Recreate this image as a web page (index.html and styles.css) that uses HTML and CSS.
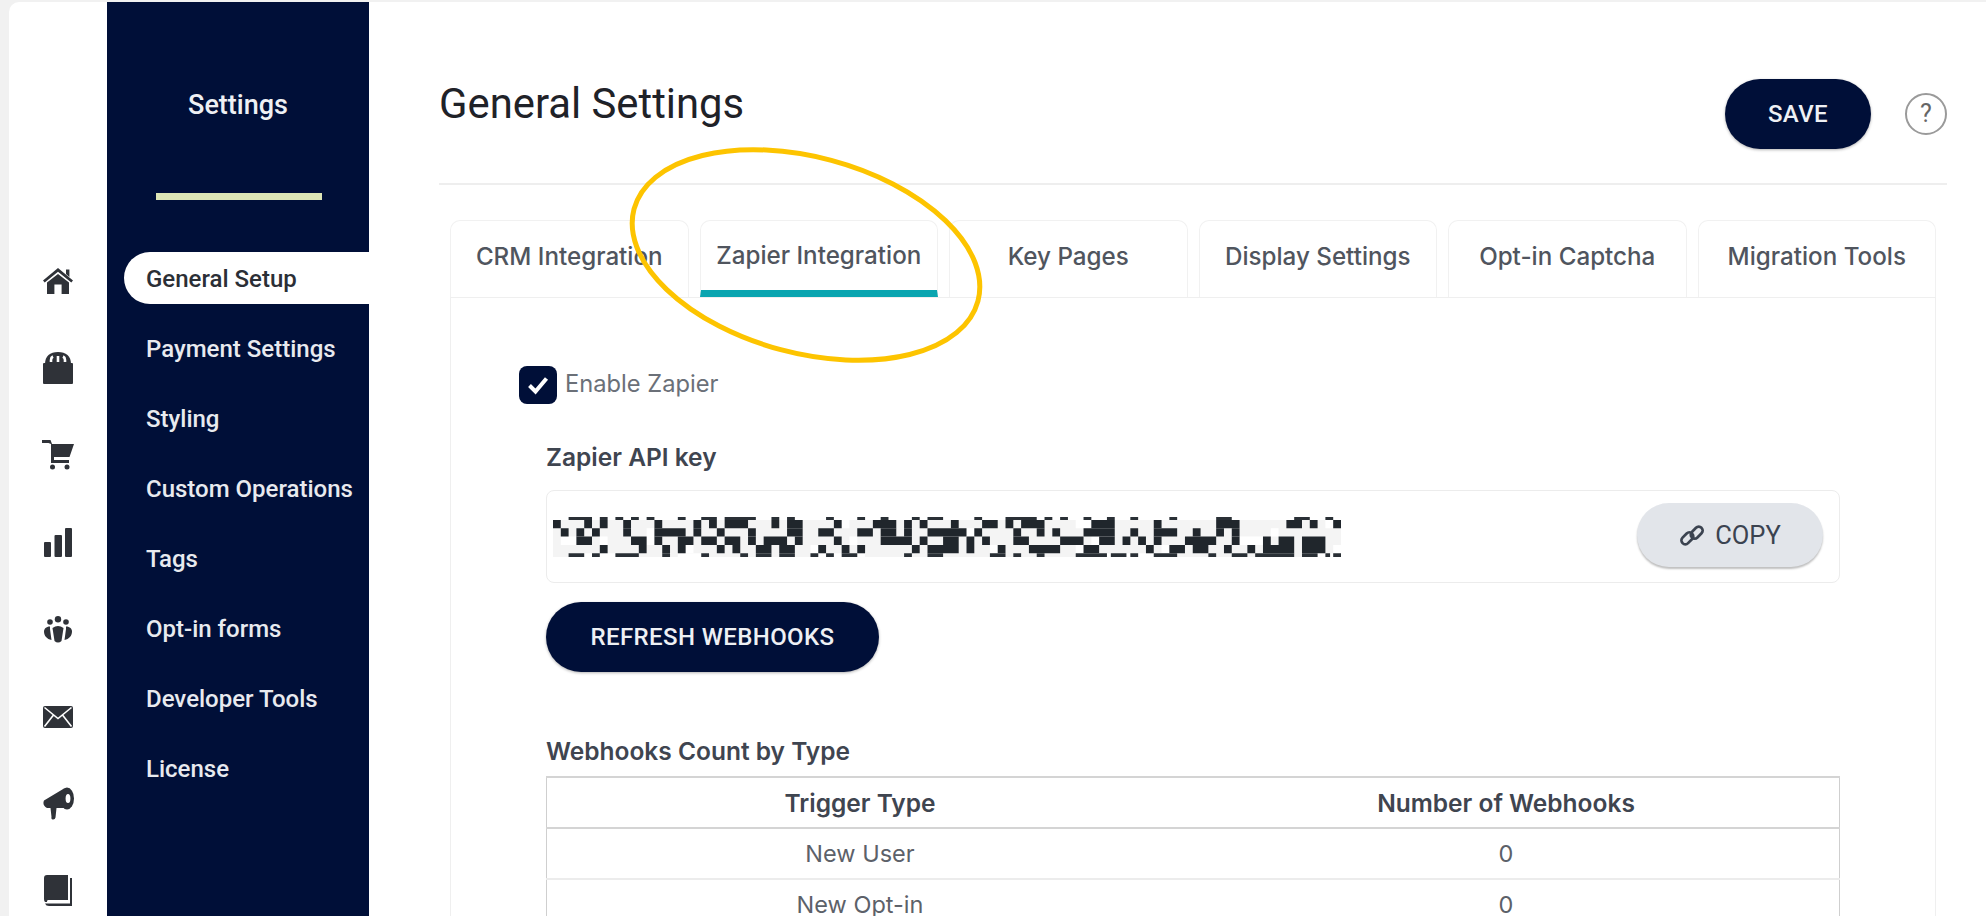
FILE: index.html
```html
<!DOCTYPE html>
<html>
<head>
  <title>General Settings</title>
  <link rel="stylesheet" href="styles.css">
</head>
<body>
  <div class="window">
    <div class="rail">
      <div class="rail-item">
        <svg width="30" height="26" viewBox="0 0 30 26"><path class="ico" d="M15 0 30 12.500 28.300 14.500 15 3.800 1.700 14.500 0 12.500ZM23 1.500h3.400v7.400L23 6Z"/><path class="ico" fill-rule="evenodd" d="M4 14.600 15 6 26 14.600V26H18.600V16.500H11.400V26H4Z"/></svg>
      </div>
      <div class="rail-item">
        <svg width="30" height="32" viewBox="0 0 30 32"><path class="ico" d="M2 12C2 4 7 0 15 0S28 4 28 12Z"/><rect class="ico" x="0" y="11" width="30" height="21" rx="1"/><path class="slot" d="M8 10V8Q8 5.500 10 4.500M15 10V4M22 10V8Q22 5.500 20 4.500"/></svg>
      </div>
      <div class="rail-item">
        <svg width="32" height="30" viewBox="0 0 32 30"><path class="ico" d="M0 0H8.500L10 4H32L27.500 17H12V20H27V23H9V4L6.500 3H0Z"/><circle class="ico" cx="10.500" cy="27" r="2.500"/><circle class="ico" cx="25" cy="27" r="2.500"/></svg>
      </div>
      <div class="rail-item">
        <svg width="28" height="29" viewBox="0 0 28 29"><rect class="ico" x="0" y="14" width="7" height="15" rx="1"/><rect class="ico" x="10.500" y="7" width="7.500" height="22" rx="1"/><rect class="ico" x="21" y="0" width="7" height="29" rx="1"/></svg>
      </div>
      <div class="rail-item">
        <svg width="28" height="27" viewBox="0 0 28 27"><circle class="ico" cx="14" cy="3.200" r="3.200"/><circle class="ico" cx="6" cy="6" r="2.800"/><circle class="ico" cx="22" cy="6" r="2.800"/><path class="ico" d="M8.500 12Q14 8 19.500 12L17.500 25Q14 28 10.500 25Z"/><path class="ico" d="M6 10.500C2 10.500 0 13 0 15.500 0 20 3 23 7.500 24L6 13ZM22 10.500C26 10.500 28 13 28 15.500 28 20 25 23 20.500 24L22 13Z"/></svg>
      </div>
      <div class="rail-item">
        <svg width="30" height="22" viewBox="0 0 30 22"><rect class="ico" width="30" height="22" rx="2"/><path class="slot thin" d="M1.500 1.500 15 12.500 28.500 1.500M1.500 20.500 10.500 9M28.500 20.500 19.500 9"/></svg>
      </div>
      <div class="rail-item">
        <svg width="31" height="33" viewBox="0 0 31 33"><path class="ico" d="M1 13.500 21 1.500V21H4Q-1 18 1 13.500ZM7.500 21H13.500L12.500 30.500Q12 33 9.500 32.500 8 32 8.500 30Z"/><ellipse class="ico" cx="24" cy="11.500" rx="7" ry="11"/><ellipse class="slot-fill" cx="25" cy="11.500" rx="2.400" ry="4.500"/></svg>
      </div>
      <div class="rail-item">
        <svg width="28" height="31" viewBox="0 0 28 31"><path class="ico" d="M3 0H24V25H4Q3 25 3 26.500V27H1Q0 26 0 24V3Q0 0 3 0Z"/><path class="ico" d="M26 3H28V31H5Q2 31 1 28.500H26Z"/></svg>
      </div>
    </div>

    <nav class="sidebar">
      <h2 class="sidebar-title">Settings</h2>
      <div class="sidebar-rule"></div>
      <ul class="menu">
        <li class="menu-item active">General Setup</li>
        <li class="menu-item">Payment Settings</li>
        <li class="menu-item">Styling</li>
        <li class="menu-item">Custom Operations</li>
        <li class="menu-item">Tags</li>
        <li class="menu-item">Opt-in forms</li>
        <li class="menu-item">Developer Tools</li>
        <li class="menu-item">License</li>
      </ul>
    </nav>

    <main class="main">
      <header class="page-head">
        <h1 class="page-title">General Settings</h1>
        <div class="page-actions">
          <button class="btn save-btn">SAVE</button>
          <span class="help">?</span>
        </div>
      </header>

      <div class="tabs">
        <div class="tab">CRM Integration</div>
        <div class="tab active">Zapier Integration</div>
        <div class="tab">Key Pages</div>
        <div class="tab">Display Settings</div>
        <div class="tab">Opt-in Captcha</div>
        <div class="tab">Migration Tools</div>
      </div>

      <section class="panel">
        <label class="check-row">
          <span class="checkbox"><svg width="24" height="20" viewBox="0 0 24 20"><path d="M3.500 10.500 9.500 16.500 20.500 3.500"/></svg></span>
          Enable Zapier
        </label>

        <h3 class="field-label">Zapier API key</h3>
        <div class="key-field">
          <svg class="mosaic" width="788" height="40" viewBox="0 0 101 4.800" preserveAspectRatio="none">
            <path class="light" d="M0 .85H101M0 1.850H101M0 2.850H101M0 3.850H101M0 4.575H3M8 4.575H16M20 4.575H33M40 4.575H70M80 4.575H96"/>
            <path class="gap" d="M1 2.850h2M6 2.850h1M12 1.850h1M12 2.850h1M17 3.850h1M24 .85h1M33 3.850h1M36 .85h2M38 2.850h1M43 .85h1M53 1.850h1M56 3.850h2M67 .85h2M69 2.850h1M67 3.850h1M78 3.850h1M88 2.850h3M92 1.850h1M99 .85h1M100 3.850h1"/>
            <path class="dark-thin top" d="M2 .175h3M6 .175h1M8 .175h1M10 .175h1M12 .175h1M16 .175h1M19 .175h2M22 .175h4M28 .175h1M30 .175h1M35 .175h1M39 .175h1M42 .175h1M46 .175h1M48 .175h2M54 .175h1M58 .175h4M63 .175h1M65 .175h1M68 .175h1M71 .175h1M74 .175h1M79 .175h1M85 .175h2M95 .175h2M99 .175h1"/>
            <path class="dark" d="M0 .85h1M4 .85h1M6 .85h1M9 .85h1M13 .85h1M18 .85h1M20 .85h1M22 .85h3M28 .85h1M30 .85h2M36 .85h1M41 .85h3M45 .85h1M47 .85h1M51 .85h1M55 .85h2M58 .85h1M60 .85h3M69 .85h3M77 .85h1M85 .85h3M94 .85h2M97 .85h1M100 .85h1"/>
            <path class="dark" d="M1 1.850h1M3 1.850h1M5 1.850h1M9 1.850h1M13 1.850h4M18 1.850h1M21 1.850h1M25 1.850h1M30 1.850h2M34 1.850h2M39 1.850h2M42 1.850h2M45 1.850h1M48 1.850h4M52 1.850h1M54 1.850h1M59 1.850h1M62 1.850h1M64 1.850h1M68 1.850h4M74 1.850h1M77 1.850h3M82 1.850h1M85 1.850h1M87 1.850h1"/>
            <path class="dark" d="M3 2.850h2M10 2.850h2M13 2.850h1M16 2.850h2M19 2.850h2M22 2.850h2M25 2.850h1M27 2.850h3M31 2.850h1M36 2.850h1M42 2.850h4M47 2.850h1M50 2.850h2M53 2.850h1M55 2.850h1M59 2.850h2M65 2.850h3M70 2.850h2M73 2.850h1M75 2.850h1M77 2.850h1M81 2.850h4M87 2.850h1M91 2.850h1M93 2.850h2M96 2.850h3"/>
            <path class="dark" d="M6 3.850h1M11 3.850h1M14 3.850h1M16 3.850h1M21 3.850h1M23 3.850h1M26 3.850h2M29 3.850h2M34 3.850h1M37 3.850h1M39 3.850h1M46 3.850h1M48 3.850h4M53 3.850h1M57 3.850h1M61 3.850h3M64 3.850h1M68 3.850h2M76 3.850h1M79 3.850h2M82 3.850h2M86 3.850h1M89 3.850h1M91 3.850h4M96 3.850h3"/>
            <path class="dark-thin bottom" d="M2 4.575h2M5 4.575h1M8 4.575h3M14 4.575h1M19 4.575h1M24 4.575h1M26 4.575h2M29 4.575h2M33 4.575h1M35 4.575h1M37 4.575h2M45 4.575h1M48 4.575h2M56 4.575h2M59 4.575h1M62 4.575h1M67 4.575h4M71.500 4.575h2M74 4.575h1M77 4.575h3M84 4.575h1M87 4.575h2M90 4.575h5M96 4.575h2M99 4.575h.6M100 4.575h1"/>
          </svg>
          <button class="copy-btn">
            <svg width="26" height="25" viewBox="0 0 25 24"><rect x="1.500" y="11" width="13" height="7.500" rx="3.700" transform="rotate(-45 8 14.700)"/><rect x="10.500" y="5.500" width="13" height="7.500" rx="3.700" transform="rotate(-45 17 9.200)"/></svg>
            COPY
          </button>
        </div>

        <button class="btn refresh-btn">REFRESH WEBHOOKS</button>

        <h3 class="field-label count-label">Webhooks Count by Type</h3>
        <table class="count-table">
          <thead>
            <tr><th class="col-type">Trigger Type</th><th>Number of Webhooks</th></tr>
          </thead>
          <tbody>
            <tr><td>New User</td><td>0</td></tr>
            <tr><td>New Opt-in</td><td>0</td></tr>
          </tbody>
        </table>
      </section>
    </main>
  </div>

  <!-- hand drawn highlight on top of the screenshot -->
  <svg class="highlight" width="360" height="224" viewBox="0 0 360 224"><ellipse cx="180" cy="112" rx="178" ry="98" transform="rotate(15 180 112)"/></svg>
</body>
</html>
```

FILE: styles.css
```css
html, body {
  height: 916px;
  overflow: hidden;
}

body {
  margin: 0;
  position: relative;
  background-color: #f1f1f1;
  font-family: Roboto, "Liberation Sans", sans-serif;
  color: #3f4550;
}

h1, h2, h3, ul {
  margin: 0;
  padding: 0;
}

button {
  font-family: inherit;
  border: none;
  cursor: pointer;
}

.window {
  display: flex;
  height: 914px;
  margin: 2px 0 0 9px;
  background-color: #ffffff;
  border-top-left-radius: 10px;
  overflow: hidden;
}

/* icon rail */
.rail {
  flex: 0 0 98px;
  padding-top: 235px;
  box-sizing: border-box;
}

.rail-item {
  height: 87.2px;
  display: flex;
  align-items: center;
  justify-content: center;
}

.ico {
  fill: #2f3238;
}

.slot {
  fill: none;
  stroke: #ffffff;
  stroke-width: 2.6;
}

.slot.thin {
  stroke-width: 1.6;
}

.slot-fill {
  fill: #ffffff;
}

/* sidebar */
.sidebar {
  flex: 0 0 262px;
  background-color: #000f38;
  box-sizing: border-box;
  color: #ffffff;
}

.sidebar-title {
  margin-top: 87px;
  font-size: 27px;
  line-height: 32px;
  font-weight: 500;
  text-align: center;
  color: #eef0f4;
}

.sidebar-rule {
  width: 166px;
  height: 7px;
  margin: 72px 47px 0 49px;
  background-color: #dde5b6;
}

.menu {
  list-style: none;
  margin-top: 52px;
  margin-left: 17px;
  display: flex;
  flex-direction: column;
  gap: 18px;
}

.menu-item {
  height: 52px;
  line-height: 54px;
  padding-left: 22px;
  font-size: 24px;
  font-weight: 500;
  color: #e8eaef;
  white-space: nowrap;
}

.menu-item.active {
  background-color: #ffffff;
  color: #2b2f36;
  border-radius: 26px 0 0 26px;
}

/* main column */
.main {
  flex: 1;
  min-width: 0;
  padding: 60px 39px 0 70px;
}

.page-head {
  display: flex;
  justify-content: space-between;
  align-items: flex-start;
  height: 121px;
  border-bottom: 2px solid #eeeeee;
}

.page-title {
  font-size: 41.8px;
  line-height: 84px;
  font-weight: 400;
  color: #1f2228;
}

.page-actions {
  display: flex;
  align-items: center;
  gap: 34px;
  margin-top: 17px;
}

.btn {
  height: 70px;
  border-radius: 35px;
  background-color: #000f38;
  color: #eef0f4;
  font-size: 24px;
  font-weight: 500;
  letter-spacing: 0.4px;
  box-shadow: 0 1px 3px rgba(0, 0, 0, 0.3);
}

.save-btn {
  width: 146px;
}

.help {
  width: 42px;
  height: 42px;
  box-sizing: border-box;
  border: 2px solid #9a9a9a;
  border-radius: 50%;
  text-align: center;
  font-size: 25px;
  line-height: 38px;
  color: #666666;
}

/* tabs */
.tabs {
  display: flex;
  gap: 11px;
  margin: 35px 11px 0;
}

.tab {
  flex: 1;
  height: 77px;
  box-sizing: border-box;
  padding-bottom: 6px;
  display: flex;
  align-items: center;
  justify-content: center;
  border: 1px solid #f1f1f1;
  border-bottom: none;
  border-radius: 10px 10px 0 0;
  font-family: Inter, Roboto, sans-serif;
  font-size: 24.2px;
  font-weight: 500;
  color: #50555e;
}

.tab.active {
  border-bottom: 7px solid #0aa5b0;
  padding-bottom: 0;
}

.panel {
  margin: 0 11px;
  padding: 68px 95px 0;
  border: 1px solid #efefef;
  border-bottom: none;
}

.check-row {
  display: flex;
  align-items: flex-start;
  gap: 8px;
  margin-left: -27px;
  font-family: Inter, Roboto, sans-serif;
  font-size: 23.7px;
  line-height: 35px;
  color: #6b7078;
}

.checkbox {
  width: 38px;
  height: 38px;
  border-radius: 8px;
  background-color: #000f38;
  display: flex;
  align-items: center;
  justify-content: center;
}

.checkbox path {
  fill: none;
  stroke: #ffffff;
  stroke-width: 4;
}

.field-label {
  margin-top: 39px;
  font-family: Inter, Roboto, sans-serif;
  font-size: 24.5px;
  line-height: 28px;
  font-weight: 600;
  color: #3f4550;
}

.key-field {
  display: flex;
  align-items: center;
  justify-content: space-between;
  height: 93px;
  box-sizing: border-box;
  margin-top: 19px;
  padding: 0 16px 3px 6px;
  border: 1px solid #ececec;
  border-radius: 8px;
}

.mosaic {
  margin-top: 3px;
  filter: blur(0.7px);
}

.mosaic path {
  fill: none;
  stroke-width: 1;
}

.mosaic .light {
  stroke: #f4f4f4;
}

.mosaic .gap {
  stroke: #ffffff;
}

.mosaic .dark {
  stroke: #20262c;
}

.mosaic .dark-thin {
  stroke: #2a3036;
}

.mosaic .dark-thin.top {
  stroke-width: 0.35;
}

.mosaic .dark-thin.bottom {
  stroke-width: 0.45;
}

.copy-btn {
  width: 186px;
  height: 64px;
  border-radius: 32px;
  background-color: #e2e5ea;
  color: #3b4350;
  font-size: 25.5px;
  display: flex;
  align-items: center;
  justify-content: center;
  gap: 10px;
  box-shadow: 0 2px 2px rgba(0, 0, 0, 0.25);
}

.copy-btn rect {
  fill: none;
  stroke: #3b4350;
  stroke-width: 2.6;
}

.refresh-btn {
  display: block;
  width: 333px;
  margin-top: 19px;
}

.count-label {
  margin-top: 65px;
}

.count-table {
  width: 100%;
  margin-top: 11px;
  border-collapse: collapse;
  table-layout: fixed;
  font-family: Inter, Roboto, sans-serif;
  font-size: 23.5px;
  text-align: center;
}

.count-table th,
.count-table td {
  height: 49px;
  padding: 0;
  border-left: 1px solid #cfcfcf;
  border-right: 1px solid #cfcfcf;
  border-bottom: 2px solid #ececec;
}

.count-table th {
  border-top: 2px solid #d4d4d4;
  border-bottom: 2px solid #d4d4d4;
  font-size: 24.5px;
  font-weight: 600;
  color: #3f4550;
}

.count-table th + th,
.count-table td + td {
  border-left: none;
}

.count-table th:first-child,
.count-table td:first-child {
  border-right: none;
}

.count-table td {
  color: #5c6169;
}

.col-type {
  width: 626px;
}

.highlight {
  position: absolute;
  left: 626px;
  top: 143px;
}

.highlight ellipse {
  fill: none;
  stroke: #fdc400;
  stroke-width: 5;
}
```
